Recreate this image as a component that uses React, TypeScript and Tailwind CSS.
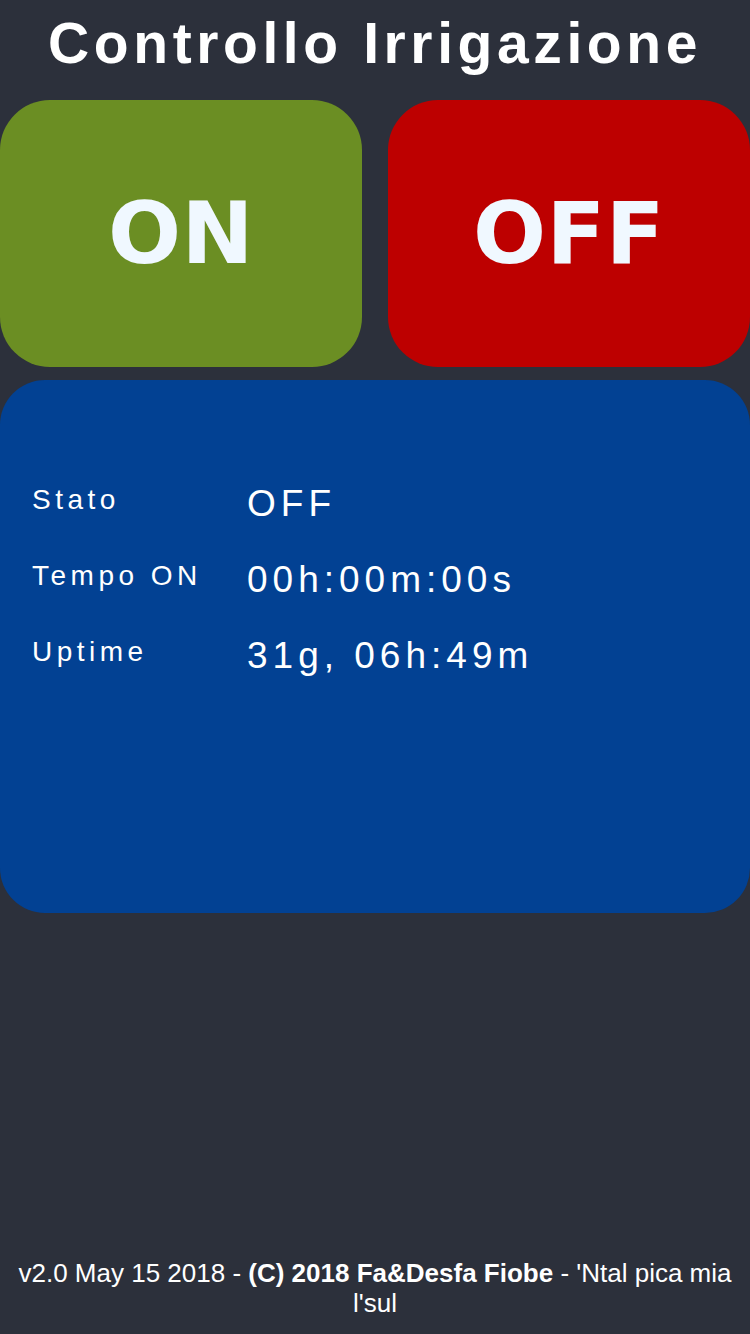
export default function App() {
  const rows = [
    { label: 'Stato', value: 'OFF' },
    { label: 'Tempo ON', value: '00h:00m:00s' },
    { label: 'Uptime', value: '31g, 06h:49m' },
  ];

  return (
    <div className="flex min-h-[1334px] w-[750px] flex-col bg-[#2c303b] text-white">
      <h1 className="h-[100px] whitespace-nowrap pt-[10px] text-center font-['Liberation_Sans',sans-serif] text-[57px] font-bold leading-[66px] tracking-[4.6px]">
        Controllo Irrigazione
      </h1>

      <div className="flex gap-[26px]">
        <button className="flex h-[267px] flex-1 items-center justify-center rounded-[50px] bg-[#6b8e23] font-['DejaVu_Sans',sans-serif] text-[86px] font-bold tracking-[0.5px] text-[#f0f8ff]">
          ON
        </button>
        <button className="flex h-[267px] flex-1 items-center justify-center rounded-[50px] bg-[#bd0000] font-['DejaVu_Sans',sans-serif] text-[86px] font-bold tracking-[0.5px] text-[#f0f8ff]">
          OFF
        </button>
      </div>

      <div className="mt-[13px] h-[533px] rounded-[45px] bg-[#024193] px-8 pt-[99px] font-['Liberation_Sans',sans-serif]">
        {rows.map((r) => (
          <div key={r.label} className="flex h-[76px] items-start">
            <span className="w-[215px] text-[28px] tracking-[4.5px]">{r.label}</span>
            <span className="mt-[5px] text-[37px] leading-[40px] tracking-[5px]">{r.value}</span>
          </div>
        ))}
      </div>

      <footer className="mt-auto px-4 pb-4 text-center font-['Liberation_Sans',sans-serif] text-[26px] leading-[30px]">
        v2.0 May 15 2018 - <b>(C) 2018 Fa&amp;Desfa Fiobe</b> - 'Ntal pica mia l'sul
      </footer>
    </div>
  );
}
